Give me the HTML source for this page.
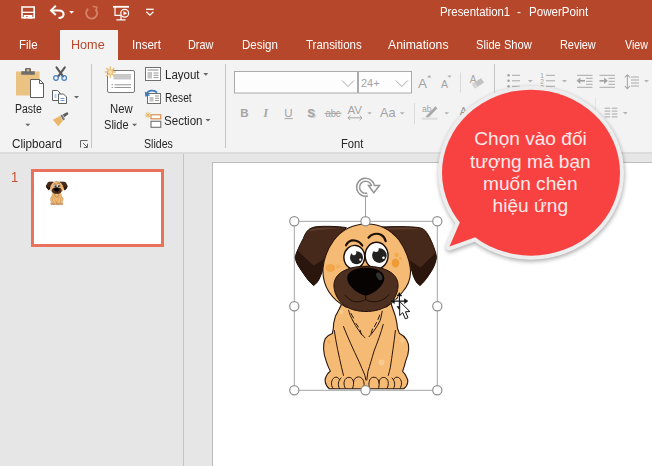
<!DOCTYPE html>
<html><head><meta charset="utf-8"><title>PowerPoint</title>
<style>
html,body{margin:0;padding:0;}
body{width:652px;height:466px;overflow:hidden;position:relative;background:#e6e6e6;font-family:"Liberation Sans",sans-serif;font-size:12px;color:#333;}
.abs{position:absolute;}
.t{position:absolute;white-space:nowrap;line-height:1;transform-origin:0 0;}
#title{left:0;top:0;width:652px;height:60px;background:#b7472a;}
#hometab{left:60px;top:30px;width:58px;height:31px;background:#f3f3f3;}
#ribbon{left:0;top:60px;width:652px;height:92px;background:#f3f3f3;}
#ribline{left:0;top:152px;width:652px;height:2px;background:#dcdcdc;}
.sep{position:absolute;width:1px;background:#c6c6c6;}
#slide{left:212px;top:162px;width:440px;height:304px;background:#fff;border-left:1px solid #bcbcbc;border-top:1px solid #bcbcbc;box-sizing:border-box;}
#panesep{left:183px;top:154px;width:1px;height:312px;background:#c4c4c4;}
#thumb{left:31px;top:169px;width:133px;height:78px;border:3px solid #e8735a;background:#fff;box-sizing:border-box;}
</style></head><body>
<div class="abs" id="title"></div>
<div class="abs" id="hometab"></div>
<div class="abs" id="ribbon"></div>
<div class="abs" id="ribline"></div>
<span class="t" style="left:439.9px;top:6.0px;font-size:12px;color:#fff;transform:scaleX(0.947);">Presentation1</span>
<span class="t" style="left:517.4px;top:6.0px;font-size:12px;color:#fff;transform:scaleX(0.975);">-</span>
<span class="t" style="left:528.6px;top:6.0px;font-size:12px;color:#fff;transform:scaleX(0.966);">PowerPoint</span>
<span class="t" style="left:18.5px;top:38.8px;font-size:12.7px;color:#fff;transform:scaleX(0.908);">File</span>
<span class="t" style="left:71.4px;top:38.8px;font-size:12.7px;color:#b7472a;transform:scaleX(0.994);">Home</span>
<span class="t" style="left:131.6px;top:38.8px;font-size:12.7px;color:#fff;transform:scaleX(0.910);">Insert</span>
<span class="t" style="left:187.7px;top:38.8px;font-size:12.7px;color:#fff;transform:scaleX(0.859);">Draw</span>
<span class="t" style="left:241.7px;top:38.8px;font-size:12.7px;color:#fff;transform:scaleX(0.908);">Design</span>
<span class="t" style="left:305.6px;top:38.8px;font-size:12.7px;color:#fff;transform:scaleX(0.903);">Transitions</span>
<span class="t" style="left:388.3px;top:38.8px;font-size:12.7px;color:#fff;transform:scaleX(0.964);">Animations</span>
<span class="t" style="left:476.2px;top:38.8px;font-size:12.7px;color:#fff;transform:scaleX(0.879);">Slide Show</span>
<span class="t" style="left:559.8px;top:38.8px;font-size:12.7px;color:#fff;transform:scaleX(0.859);">Review</span>
<span class="t" style="left:624.9px;top:38.8px;font-size:12.7px;color:#fff;transform:scaleX(0.840);">View</span>
<span class="t" style="left:14.6px;top:102.7px;font-size:12px;color:#262626;transform:scaleX(0.874);">Paste</span>
<span class="t" style="left:12.0px;top:138.0px;font-size:12px;color:#262626;transform:scaleX(0.973);">Clipboard</span>
<span class="t" style="left:109.6px;top:103.1px;font-size:12px;color:#262626;transform:scaleX(0.941);">New</span>
<span class="t" style="left:104.0px;top:119.0px;font-size:12px;color:#262626;transform:scaleX(0.922);">Slide</span>
<span class="t" style="left:164.8px;top:68.8px;font-size:12px;color:#262626;transform:scaleX(0.959);">Layout</span>
<span class="t" style="left:164.8px;top:91.8px;font-size:12px;color:#262626;transform:scaleX(0.850);">Reset</span>
<span class="t" style="left:164.4px;top:115.0px;font-size:12px;color:#262626;transform:scaleX(0.963);">Section</span>
<span class="t" style="left:143.5px;top:137.9px;font-size:12px;color:#262626;transform:scaleX(0.884);">Slides</span>
<span class="t" style="left:341.0px;top:137.9px;font-size:12px;color:#262626;transform:scaleX(0.932);">Font</span>

<div class="sep" style="left:91px;top:64px;height:84px;"></div>
<div class="sep" style="left:225px;top:64px;height:84px;"></div>
<div class="sep" style="left:494px;top:64px;height:84px;"></div>
<div class="abs" id="panesep"></div>
<div class="abs" id="slide"></div>
<span class="t" style="left:11px;top:169.600px;color:#c8502f;font-size:14.500px;transform:scaleX(0.9);">1</span>
<div class="abs" id="thumb"></div>

<svg class="abs" style="left:0;top:0" width="652" height="466" viewBox="0 0 652 466">
  <defs>
    <filter id="sh" x="-20%" y="-20%" width="140%" height="140%"><feGaussianBlur stdDeviation="2.2"/></filter>
    <g id="bubble"><ellipse cx="531" cy="172.650" rx="89" ry="83"/><path d="M449.500,246.500 L459.700,222.800 L468,205 L492,231 L473.200,238 Z"/></g>
  </defs>
<!-- QAT icons -->
<g fill="none" stroke="#fff" stroke-width="1.600">
  <!-- save -->
  <path d="M22,7 H34.200 V17.800 H22 Z"/>
  <path d="M22,12.300 H34.200" stroke-width="1.300"/>
  <!-- undo -->
  <path d="M51.500,10.400 H58.500 C62,10.400 63.600,12.300 63.600,14.300 C63.600,16.800 61.500,18 58.500,18" stroke-width="2"/>
  <path d="M55.800,5.800 L51,10.400 L55.800,15" stroke-width="2"/>
  <!-- presentation -->
  <path d="M113,6.800 H129" stroke-width="1.800"/>
  <path d="M115,7 V15.300 H120.500 M116.400,19.900 H125.600 M121,15.300 V19.900" stroke-width="1.200"/>
  <circle cx="124.700" cy="13.300" r="3.900" stroke-width="1.200"/>
  <!-- customize -->
  <path d="M146.100,9.300 H153.700" stroke-width="1.300"/>
  <path d="M146.400,11.800 L149.900,15.100 L153.400,11.800" stroke-width="1.300"/>
</g>
<path d="M23.700,14.900 H32.400 V18.600 H27.800 V16.300 H26 V18.600 H23.700 Z" fill="#fff"/>
<path d="M123.500,11.300 L127.200,13.300 L123.500,15.300 Z" fill="#fff"/>
<path d="M69.200,11 H74 L71.600,13.700 Z" fill="#fff"/>
<!-- redo dimmed -->
<g fill="none" stroke="#d4836b" stroke-width="1.800">
  <path d="M95.800,9.500 A5.500,5.500 0 1 1 88.200,8.800"/>
  <path d="M92.800,6.300 L97,7.300 L95.800,11.500" stroke-width="1.500"/>
</g>

<!-- Paste icon -->
<rect x="16" y="71.500" width="23.500" height="24" fill="#eac282"/>
<path d="M21.300,74.800 V71.300 H25 V69.300 Q25,68 26.300,68 H29.700 Q31,68 31,69.300 V71.300 H34.800 V74.800 Z" fill="#6e6e6e"/><rect x="26.800" y="69.300" width="2.400" height="2" fill="#eac282"/>
<path d="M30.500,79.500 H39.500 L43.500,83.500 V97.500 H30.500 Z" fill="#fff" stroke="#5f5f5f" stroke-width="1"/>
<path d="M39.500,79.500 V83.500 H43.500" fill="none" stroke="#5f5f5f" stroke-width="1"/>
<path d="M25.300,123.700 H30.300 L27.800,126.200 Z" fill="#666"/>
<!-- scissors -->
<g fill="none" stroke-linecap="round">
  <path d="M56.500,67.300 L63,76.300 M64.800,67.300 L58.300,76.300" stroke="#585858" stroke-width="2.100"/>
  <circle cx="56" cy="78" r="2.300" stroke="#4a80c0" stroke-width="1.200"/>
  <circle cx="64.200" cy="78" r="2.300" stroke="#4a80c0" stroke-width="1.200"/>
</g>
<!-- copy -->
<g fill="#fff" stroke="#5f5f5f" stroke-width="1">
  <path d="M52.500,90.500 H57.500 L60,93 V100.500 H52.500 Z"/>
  <path d="M58.500,94 H63.500 L66.500,97 V103.500 H58.500 Z"/>
</g>
<path d="M60.500,98.500 H64.500 M60.500,100.500 H64.500" stroke="#4a7ebf" stroke-width="0.800"/>
<path d="M54.500,95 H56.500 M54.500,97 H56.500" stroke="#4a7ebf" stroke-width="0.800"/>
<path d="M74,96 H79 L76.500,98.600 Z" fill="#666"/>
<!-- format painter -->
<path d="M52.800,119.700 L60,116 L62.800,120.800 L58.300,126.300 Z" fill="#eab768"/>
<path d="M60.300,115.600 L62.200,114.600 L65,119.200 L63.200,120.600 Z" fill="#7a7a7a"/>
<path d="M62.800,114.600 L67.300,111.900 L68.500,113.900 L64.300,117.200 Z" fill="#5c5c5c"/>
<!-- dialog launcher -->
<path d="M80.500,147.500 V140.500 H87.500" fill="none" stroke="#666" stroke-width="1"/>
<path d="M83,143 L87,147 M87.500,143.800 V147.500 H83.800" fill="none" stroke="#666" stroke-width="1"/>

<!-- New slide icon -->
<rect x="107.500" y="70.500" width="27" height="22" rx="1.500" fill="#fff" stroke="#7a7a7a" stroke-width="1"/>
<rect x="113.500" y="74" width="17.500" height="5.500" fill="#c9c9c9"/>
<path d="M111.500,84.800 H113 M114.500,84.800 H131 M111.500,87.500 H113 M114.500,87.500 H131" stroke="#8a8a8a" stroke-width="0.900"/>
<g stroke="#eac27c" stroke-width="1.500" stroke-linecap="butt">
  <path d="M110.300,66.500 V77.700 M104.700,72.100 H115.900 M106.300,68.100 L114.300,76.100 M114.300,68.100 L106.300,76.100"/>
</g>
<circle cx="110.300" cy="72.100" r="2.400" fill="#f6dfb4" stroke="#eac27c" stroke-width="1"/>
<path d="M132,123.700 H137.200 L134.600,126.300 Z" fill="#666"/>
<!-- Layout icon -->
<rect x="145.500" y="67.500" width="15" height="13" fill="#fff" stroke="#6f6f6f" stroke-width="1"/>
<path d="M147.500,70 H158.500" stroke="#8a8a8a" stroke-width="1"/>
<rect x="147.500" y="72" width="4.500" height="6.500" fill="#c4c4c4"/>
<path d="M153.500,73 H158.500 M153.500,75.300 H158.500 M153.500,77.600 H158.500" stroke="#8a8a8a" stroke-width="0.900"/>
<path d="M203.300,73 H208.300 L205.800,75.700 Z" fill="#666"/>
<!-- Reset icon -->
<rect x="147.500" y="93.500" width="13" height="10" fill="#fff" stroke="#6f6f6f" stroke-width="1"/>
<rect x="149.500" y="97" width="4" height="4.500" fill="#c4c4c4"/>
<path d="M155,96 H159 M155,98.300 H159 M155,100.600 H159" stroke="#8a8a8a" stroke-width="0.900"/>
<path d="M146,94.500 C148,90 154,89.500 157,92.500" fill="none" stroke="#3f79bd" stroke-width="1.800"/>
<path d="M144.800,91.500 L145.300,96.800 L150.300,95.200 Z" fill="#3f79bd"/>
<!-- Section icon -->
<rect x="151" y="114.800" width="9.800" height="4" fill="#fff" stroke="#d8853a" stroke-width="1.100"/>
<rect x="151" y="121.300" width="9.800" height="6" fill="#fff" stroke="#6f6f6f" stroke-width="1.100"/>
<g stroke="#eab768" stroke-width="1">
  <path d="M148,111.800 V118.200 M144.800,115 H151.200 M145.700,112.700 L150.300,117.300 M150.300,112.700 L145.700,117.300"/>
</g>
<path d="M205.400,119 H210.600 L208,121.600 Z" fill="#666"/>

<!-- Font group -->
<rect x="234.500" y="71.500" width="123" height="21.500" fill="#fdfdfd" stroke="#ababab" stroke-width="1"/>
<rect x="358.500" y="71.500" width="53" height="21.500" fill="#fdfdfd" stroke="#ababab" stroke-width="1"/>
<path d="M342,80.500 L348,86.500 L354,80.500" fill="none" stroke="#a9a9a9" stroke-width="1"/>
<path d="M395.800,80.500 L401.800,86.500 L407.800,80.500" fill="none" stroke="#a9a9a9" stroke-width="1"/>
<g font-family="Liberation Sans, sans-serif" fill="#a3a3a3">
  <text x="361" y="87" font-size="11.500" textLength="18.500" lengthAdjust="spacingAndGlyphs">24+</text>
  <text x="240.300" y="116.600" font-size="11.500" font-weight="bold">B</text>
  <text x="263.500" y="116.600" font-size="11.500" font-style="italic" font-family="Liberation Serif, serif" font-weight="bold">I</text>
  <text x="284.300" y="116.600" font-size="11.500">U</text>
  <text x="308.600" y="118.200" font-size="11.500" font-weight="bold" fill="#cfcfcf">S</text>
  <text x="307.300" y="116.800" font-size="11.500" font-weight="bold">S</text>
  <text x="325.500" y="116.800" font-size="10" textLength="15" lengthAdjust="spacingAndGlyphs">abc</text>
  <text x="347.500" y="114.200" font-size="11" textLength="14.500" lengthAdjust="spacingAndGlyphs">AV</text>
  <text x="380" y="117.200" font-size="13" textLength="15.500" lengthAdjust="spacingAndGlyphs">Aa</text>
  <text x="418" y="87.500" font-size="13.500">A</text>
  <text x="441" y="87.500" font-size="10.500">A</text>
  <text x="422" y="112.300" font-size="8.500">ab</text>
</g>
<g stroke="#a6a6a6" fill="none" stroke-width="1">
  <path d="M284.500,118.600 H292.800"/>
  <path d="M324.500,113.400 H341.500"/>
  <path d="M348,117.800 H362 M350.300,115.500 L348,117.800 L350.300,120.100 M359.700,115.500 L362,117.800 L359.700,120.100"/>
</g>
<g fill="#b0b0b0">
  <path d="M367.300,112.200 H371.900 L369.600,114.500 Z"/>
  <path d="M399.800,112.200 H404.600 L402.200,114.600 Z"/>
  <path d="M444.500,112.200 H449 L446.750,114.500 Z"/>
  <path d="M427,77.500 L429.300,75 L431.600,77.500 Z"/>
  <path d="M447.300,75.500 H451.700 L449.500,77.800 Z"/>
</g>
<!-- highlighter pen -->
<path d="M426,116.300 L435.300,106.300 L437.500,108.300 L428.800,117.300 L425.800,117.500 Z" fill="#a9a9a9"/>
<rect x="421.700" y="117.600" width="16" height="2.200" fill="#dedede"/>
<!-- clear formatting -->
<text x="469.800" y="82.500" font-size="10" font-family="Liberation Sans, sans-serif" fill="#a6a6a6">A</text>
<text x="459.800" y="115" font-size="11" font-family="Liberation Sans, sans-serif" fill="#9a9a9a">A</text>
<g transform="rotate(-33 478 83.300)"><rect x="472.500" y="80.600" width="11" height="5.400" rx="0.800" fill="#c2c2c2"/><rect x="472.500" y="80.600" width="3.500" height="5.400" rx="0.800" fill="#d6d6d6"/></g>
<!-- small separators -->
<path d="M414.500,103 V124 M460.500,72.500 V92.500" stroke="#d9d9d9" stroke-width="1"/><path d="M595.500,98 V110" stroke="#e4e4e4" stroke-width="1"/>

<!-- Paragraph group -->
<g stroke="#a9a9a9" stroke-width="1" fill="none">
  <path d="M512,75.300 H520 M512,80.800 H520 M512,86.300 H520"/>
  <path d="M546,75.300 H555 M546,80.800 H555 M546,86.300 H555"/>
  <path d="M577,75.300 H592.500 M586,78.300 H592.500 M586,81.300 H592.500 M586,84.300 H592.500 M577,87.300 H592.500"/>
  <path d="M599.500,75.300 H615 M608.500,78.300 H615 M608.500,81.300 H615 M608.500,84.300 H615 M599.500,87.300 H615"/>
  <path d="M631,77 H639 M631,80 H639 M631,83 H639 M631,86 H639"/>
  <path d="M627.400,75 V88.500 M624.900,77.300 L627.400,74.700 L629.900,77.300 M624.900,86.200 L627.400,88.800 L629.900,86.200" stroke-width="1.100"/>
  <path d="M604.600,108.200 H610.200 M611.800,108.200 H617.400 M604.600,111.100 H610.200 M611.800,111.100 H617.400 M604.600,114 H610.200 M611.800,114 H617.400 M604.600,116.900 H610.200 M611.800,116.900 H617.400"/>
</g>
<g stroke="#a3a3a3" stroke-width="1.700" fill="none">
  <path d="M578.500,80.800 H585"/>
  <path d="M599.500,80.800 H606"/>
</g>
<g fill="#a3a3a3">
  <path d="M576.600,80.800 L580.300,77.600 V84 Z"/>
  <path d="M607.800,80.800 L604.100,77.600 V84 Z"/>
  <circle cx="508.600" cy="75.300" r="1.300"/><circle cx="508.600" cy="80.800" r="1.300"/><circle cx="508.600" cy="86.300" r="1.300"/>
</g>
<g font-family="Liberation Sans, sans-serif" font-size="6.500" fill="#a0a0a0">
  <text x="540.300" y="77.800">1</text><text x="540.300" y="83.800">2</text><text x="540.300" y="89.800">3</text>
</g>
<g fill="#b5b5b5">
  <path d="M527.800,80 H532.800 L530.300,82.500 Z"/>
  <path d="M562,80 H567 L564.500,82.500 Z"/>
  <path d="M644,80 H649 L646.500,82.500 Z"/>
  <path d="M622.800,112 H627.800 L625.300,114.500 Z"/>
</g>

  <!-- selection box -->
  <rect x="294.300" y="221.300" width="143" height="169" fill="none" stroke="#a6a6a6" stroke-width="1"/>
<g id="dog" stroke-linejoin="round" stroke-linecap="round">
  <!-- body -->
  <path d="M343,300 C341,307 337.500,312 335.400,316.300 C334,320.500 333.300,324.500 333.300,328.500 L332.300,333.600 C329.500,334.500 327,336.300 325.200,338.700 C323.800,341.500 323.300,345 323.600,348.900 C323.800,353.500 324.800,357.500 326.200,361.100 C327.300,364.800 329,368.300 330.300,371.300 C328.500,372.500 327,374.300 326.200,376.400 C325.200,378 325,379.800 325.200,381.500 C325.500,384.500 327,386.800 329.300,388.800 L403.600,388.800 C406,387 407.500,384.800 407.700,382.500 C408,380.800 407.700,379 406.600,377.400 C405.800,375 404.500,373 402.600,371.300 C403.800,368 404.800,364.800 405.600,361.100 C407.300,357.300 408.500,353.300 408.700,348.900 C408.900,345.500 408.200,342.300 406.600,339.700 C404.800,337 402.300,334.800 399.500,333.600 L397.500,328.500 C397.300,324.500 396.500,320.500 395.400,316.300 C394,312 392,307 390,300 Z" fill="#f5bb74" stroke="#2b160a" stroke-width="1.100"/>
  <g fill="none" stroke="#2b160a" stroke-width="1">
    <path d="M334.300,330.500 C336,343 339,356 341.500,367.200 C342.300,370 343,373 343.500,375.400"/>
    <path d="M395.400,330.500 C394,343 392,356 390.400,367.200 C389.800,370 389,373 388.300,375.400"/>
    <path d="M343.500,326.500 C348,338 353.500,350 358.800,361.100 C361,366 363,371 364.900,375.400 L365.800,380"/>
    <path d="M383.200,324.400 C381,333 377.500,342 374.100,350.900 C372,358 370,365 368,371.300 L366.800,380"/>
    <path d="M348.600,310.200 C349.500,314 351,317.500 352.700,320.400 M351,313.500 L353.500,318 M352.700,320.400 C354.500,324 356.500,327.500 358.800,330.500 C360.500,333 362.500,335.500 364.900,337.700 M356,323.500 L358.300,327 M360,330 L361.500,334.500"/>
    <path d="M382.200,311.200 C381.800,314.500 381,317.500 380.200,320.400 C378.500,324 376.500,327.500 374.100,330.500 C372.500,332.800 370.800,334.800 369,336.700 M379.800,315 L378,319.500 M376.500,322.500 L374.500,326.500 M372.500,329 L371,333.500"/>
    <!-- toes -->
    <path d="M333,388.500 C330.500,385 331,379.500 334.500,377.500 C336.500,376.500 338.500,377.500 339.500,379.500 M339.500,388.500 C337.500,385.500 338,380.500 341,378"/>
    <path d="M345.500,388.500 C343,385 343.500,379 347.500,377.500 C351.500,376.500 354,380 353.500,384.500 C353.300,386 353,387.500 352.500,388.500 M353.500,383 C353.500,379 356,376.500 359.500,377 C363,378 364.500,382 364,386 C363.800,387 363.500,388 363,388.500"/>
    <path d="M369.500,388.500 C368.500,385 368.500,380 371.500,377.800 C375,376 378.500,378.500 379,382.500 C379.300,385 379,387 378.500,388.500 M379,383 C379,379.500 381,377 384.500,377.500 C388.500,378.500 389.500,384 387,388.500"/>
    <path d="M393.500,388.500 C395.500,385.500 395,380.500 392,378 M400,388.500 C402.500,385 402,379.500 398.500,377.500 C396.500,376.500 394.500,377.500 393.500,379.500"/>
  </g>
  <!-- faint spots -->
  <circle cx="341" cy="312" r="2.200" fill="#f7c98d"/><circle cx="381.500" cy="362.500" r="3" fill="#f7cb92"/><circle cx="329" cy="342" r="2" fill="#f2ae5c"/><circle cx="402.500" cy="340.500" r="2.200" fill="#f7c98d"/>
  <!-- left ear -->
  <path d="M346,227.500 C338,226.300 325,226 317.200,226.600 C313,227 310.500,228.300 308.600,229.700 C306,232 304.500,235 303.400,238.300 C301.500,242 299.500,245.500 298.300,248.600 C296.800,252 295.500,255 295.200,257.200 C295.500,260.500 297,263.500 298.300,265.800 C300.500,269.500 303,273 305.200,276 C307.500,279.500 310.500,283 313.700,285.500 C316.500,283.500 318.500,281 319.700,277.800 C321.300,274.500 322.500,271 323.200,267.500 L336,240 Z" fill="#47291b" stroke="#23110a" stroke-width="1"/>
  <path d="M295.200,257.200 L297.400,250.300 L313.700,265.800 L324.500,258.500 L323.200,267.500 C322.500,271 321.300,274.500 319.700,277.800 C318.500,281 316.500,283.500 313.700,285.500 C310.500,283 307.500,279.500 305.200,276 C303,273 300.500,269.500 298.300,265.800 C297,263.500 295.500,260.500 295.200,257.200 Z" fill="#2b160d"/>
  <path d="M309.500,230 C316,227.300 330,227.300 342,228.300 C330,229.300 318,229.300 309.500,231.500 Z" fill="#5e3d2a"/>
  <!-- right ear -->
  <path d="M381.500,227 C395.600,226.500 409.300,226.300 419.600,227.700 C423,228.500 425,230 426.500,232.300 C428.500,235 430.300,238.500 431.600,241.700 C433,245 434.500,248.500 435.400,252 C436,254 436.300,255.500 436.400,257.200 C436.200,260 435.300,263 434.200,265.800 C432.500,269.500 430.500,273 428.200,276 C426,279.300 423.500,282.500 420,285.500 C417.800,284 416.300,282.300 415.300,280.300 C413.700,277.300 412.600,274 411.900,270.900 L395,238 Z" fill="#47291b" stroke="#23110a" stroke-width="1"/>
  <path d="M436.400,257.200 L435.400,252.900 L420.500,267.500 L409.500,260 L411.900,270.900 C412.600,274 413.700,277.300 415.300,280.300 C416.300,282.300 417.800,284 420,285.500 C423.500,282.500 426,279.300 428.200,276 C430.500,273 432.500,269.500 434.200,265.800 C435.300,263 436.200,260 436.400,257.200 Z" fill="#2b160d"/>
  <path d="M386,228.200 C398,227.300 412,227.300 421,229.200 C412,229.300 398,229.300 386,229.700 Z" fill="#5e3d2a"/>
  <!-- head -->
  <path d="M366,224 C378,223.600 390,229 399,240 C405,248.500 409,258 410.300,268 C411.300,277 408,286 402.500,292 C398,298 393,303 386,307 L346,307 C339,303.500 333,298 329,292 C324.500,285 322.500,277 323,268 C324,258 328,248 334,240 C342,229.500 354,224.300 366,224 Z" fill="#f5bb74" stroke="#2b160a" stroke-width="1.100"/>
  <!-- cheeks -->
  <ellipse cx="330.500" cy="268" rx="4.800" ry="4" fill="#f1a64b"/>
  <ellipse cx="338" cy="266.500" rx="2.200" ry="2" fill="#f3ae5a"/>
  <ellipse cx="395.500" cy="263" rx="3.800" ry="4.500" fill="#f09c35"/>
  <ellipse cx="396.500" cy="255" rx="2.300" ry="2.300" fill="#f2aa52"/>
  <ellipse cx="400.500" cy="258.500" rx="1.500" ry="1.500" fill="#f2aa52"/>
  <!-- eyes -->
  <ellipse cx="354.300" cy="257.100" rx="10.400" ry="11.700" fill="#fff" stroke="#1a0d06" stroke-width="1.400" transform="rotate(8 354.300 257.100)"/>
  <ellipse cx="376.600" cy="255.600" rx="11.500" ry="13.300" fill="#fff" stroke="#1a0d06" stroke-width="1.400"/>
  <circle cx="356.500" cy="257.700" r="6.500" fill="#23211f"/>
  <circle cx="379.400" cy="255.600" r="7.300" fill="#23211f"/>
  <circle cx="354" cy="252.800" r="2.400" fill="#fff"/><circle cx="360.300" cy="259.700" r="1.100" fill="#fff"/>
  <circle cx="376" cy="249.300" r="2.700" fill="#fff"/><circle cx="383.500" cy="257.700" r="1.300" fill="#fff"/>
  <!-- brows -->
  <path d="M346,245.300 C348,241.300 352,239.800 356,240.700 C359,241.500 361,243.300 362.300,245.600" fill="none" stroke="#1e0f07" stroke-width="2.100"/>
  <path d="M368.500,237.600 C371,233.800 377,232.800 381,234.700 C383.500,236 385,238.500 385.700,241.200" fill="none" stroke="#1e0f07" stroke-width="2.200"/>
  <!-- muzzle -->
  <path d="M366,266.300 C376,266 385,268.500 391,272.500 C396,276 398.500,281 398,287 C397.500,294 393.500,301 388,305.500 C381,310 373,311.500 366,311.500 C359,311.500 351,310 344,305.500 C338.500,301 334.500,294 334,287 C333.500,281 336,276 341,272.500 C347,268.500 356,266 366,266.300 Z" fill="#4c2f1e" stroke="#23110a" stroke-width="1"/>
  <!-- mouth -->
  <path d="M345.300,295.400 C349,300 353,301.800 356.500,301.800 C360,301.800 363.500,301 365.700,299.500 C368,301 371.500,301.800 375,301.800 C379,301.800 385,299.500 389.200,294.400" fill="none" stroke="#1f0f08" stroke-width="1"/>
  <path d="M365.700,294 L365.700,299.500" stroke="#1f0f08" stroke-width="1"/>
  <!-- nose -->
  <path d="M365.700,267.900 C375,267.500 384.500,271 384.300,278.500 C384,285 376,292 369,294.800 C367,295.600 364.500,295.600 362.500,294.800 C355.500,292 347.500,285 347.200,278.500 C347,271 356.500,267.500 365.700,267.900 Z" fill="#070303"/>
  <ellipse cx="379.300" cy="276.300" rx="2.600" ry="4.200" fill="#333" transform="rotate(-30 379.300 276.300)"/>
</g>

  <!-- mini dog -->
  <use href="#dog" transform="translate(46,181.500) scale(0.1514,0.1412) translate(-295,-224)"/>
  <!-- handles -->
  <path d="M365.500,197 V216.500" stroke="#a0a0a0" stroke-width="1"/>
  <g fill="#fff" stroke="#8f8f8f" stroke-width="1.200">
    <circle cx="294.300" cy="221.300" r="4.600"/><circle cx="365.500" cy="221.300" r="4.600"/><circle cx="437.300" cy="221.300" r="4.600"/>
    <circle cx="294.300" cy="306.300" r="4.600"/><circle cx="437.300" cy="306.300" r="4.600"/>
    <circle cx="294.300" cy="390.300" r="4.600"/><circle cx="365.500" cy="390.300" r="4.600"/><circle cx="437.300" cy="390.300" r="4.600"/>
  </g>
  <!-- rotate handle -->
  <path d="M373.100,187.300 A7.500,7.500 0 1 0 367.500,194.500" fill="none" stroke="#959595" stroke-width="4.400"/>
  <path d="M368.500,185.500 H379.500 L373.800,192.800 Z" fill="#fff" stroke="#959595" stroke-width="1.500"/>
  <path d="M373.100,187.300 A7.500,7.500 0 1 0 367.500,194.500" fill="none" stroke="#fff" stroke-width="1.500"/>
  <path d="M371.600,187 H374.600" stroke="#fff" stroke-width="1.800"/>
  <!-- cursors -->
  <g stroke="#fff" stroke-width="2.600" fill="none" opacity="0.900">
    <path d="M392,301.100 H407 M399.400,293.500 V308.500"/>
  </g>
  <g stroke="#111" stroke-width="1.100" fill="#111">
    <path d="M393,301.100 H406 M399.400,294.500 V308" fill="none"/>
    <path d="M399.400,292.600 L397,296 H401.800 Z M399.400,309.800 L397,306.500 H401.800 Z M391,301.100 L394.400,298.700 V303.500 Z M407.900,301.100 L404.500,298.700 V303.500 Z" stroke-width="0.500"/>
  </g>
  <path d="M399.700,301.500 L399.700,315.500 L402.700,312.600 L405.300,318.800 L408,317.700 L405.400,311.800 L409.800,311.500 Z" fill="#fff" stroke="#111" stroke-width="1"/>
  <!-- callout -->
  <g id="callout">
    <use href="#bubble" fill="#000" opacity="0.330" filter="url(#sh)" stroke="#000" stroke-width="8" stroke-linejoin="round" transform="translate(0.500,1.800)"/>
    <use href="#bubble" fill="#ededed" stroke="#ededed" stroke-width="8" stroke-linejoin="round"/>
    <use href="#bubble" fill="#f84242"/>
    <g font-family="Liberation Sans, sans-serif" font-size="19.100" fill="#fde9e8" text-anchor="middle">
      <text x="530.500" y="145.300">Chọn vào đối</text>
      <text x="530.300" y="167.500">tượng mà bạn</text>
      <text x="530.300" y="189.800">muốn chèn</text>
      <text x="530.300" y="212">hiệu ứng</text>
    </g>
  </g>
</svg>
</body></html>
